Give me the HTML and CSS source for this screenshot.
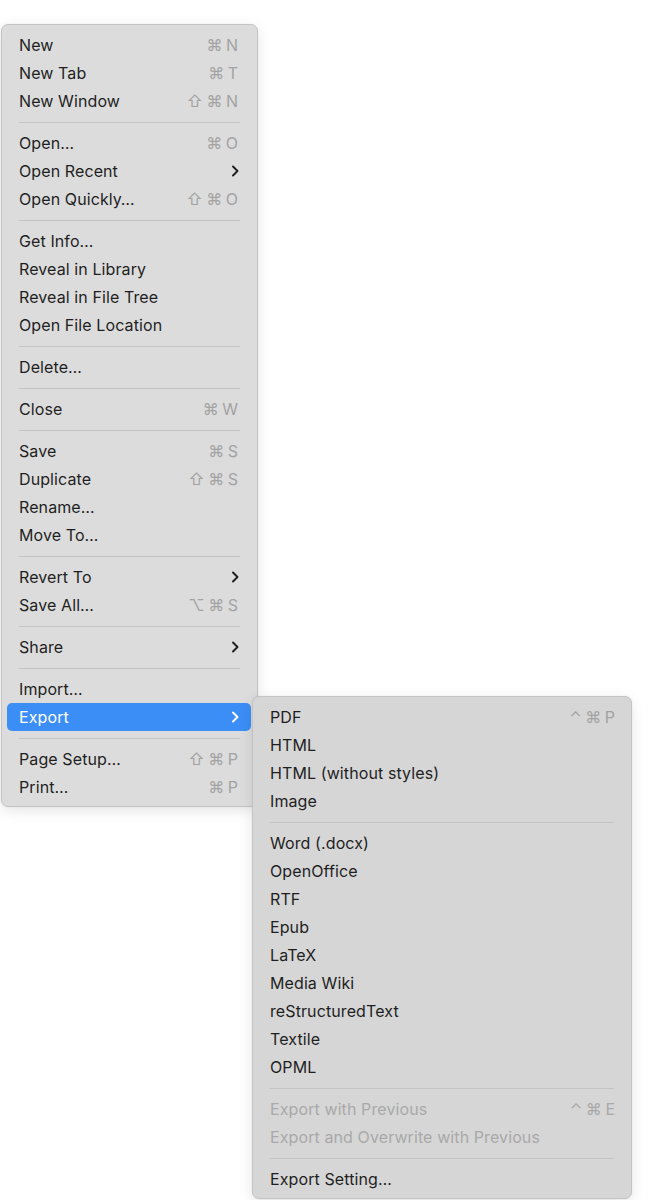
FILE: index.html
```html
<!DOCTYPE html>
<html>
<head>
<meta charset="utf-8">
<link rel="stylesheet" href="styles.css">
</head>
<body>
<div class="menu main">
  <div class="item"><span class="label">New</span><span class="key">⌘ N</span></div>
  <div class="item"><span class="label">New Tab</span><span class="key">⌘ T</span></div>
  <div class="item"><span class="label">New Window</span><span class="key">⇧ ⌘ N</span></div>
  <div class="sep"></div>
  <div class="item"><span class="label">Open…</span><span class="key">⌘ O</span></div>
  <div class="item"><span class="label">Open Recent</span><svg class="chev" viewBox="0 0 8 12"><path d="M2 1.5 L6.5 6 L2 10.5"/></svg></div>
  <div class="item"><span class="label">Open Quickly…</span><span class="key">⇧ ⌘ O</span></div>
  <div class="sep"></div>
  <div class="item"><span class="label">Get Info…</span></div>
  <div class="item"><span class="label">Reveal in Library</span></div>
  <div class="item"><span class="label">Reveal in File Tree</span></div>
  <div class="item"><span class="label">Open File Location</span></div>
  <div class="sep"></div>
  <div class="item"><span class="label">Delete…</span></div>
  <div class="sep"></div>
  <div class="item"><span class="label">Close</span><span class="key">⌘ W</span></div>
  <div class="sep"></div>
  <div class="item"><span class="label">Save</span><span class="key">⌘ S</span></div>
  <div class="item"><span class="label">Duplicate</span><span class="key">⇧ ⌘ S</span></div>
  <div class="item"><span class="label">Rename…</span></div>
  <div class="item"><span class="label">Move To…</span></div>
  <div class="sep"></div>
  <div class="item"><span class="label">Revert To</span><svg class="chev" viewBox="0 0 8 12"><path d="M2 1.5 L6.5 6 L2 10.5"/></svg></div>
  <div class="item"><span class="label">Save All…</span><span class="key">⌥ ⌘ S</span></div>
  <div class="sep"></div>
  <div class="item"><span class="label">Share</span><svg class="chev" viewBox="0 0 8 12"><path d="M2 1.5 L6.5 6 L2 10.5"/></svg></div>
  <div class="sep"></div>
  <div class="item"><span class="label">Import…</span></div>
  <div class="item active"><span class="label">Export</span><svg class="chev" viewBox="0 0 8 12"><path d="M2 1.5 L6.5 6 L2 10.5"/></svg>
    <div class="menu sub">
      <div class="item"><span class="label">PDF</span><span class="key">⌃ ⌘ P</span></div>
      <div class="item"><span class="label">HTML</span></div>
      <div class="item"><span class="label">HTML (without styles)</span></div>
      <div class="item"><span class="label">Image</span></div>
      <div class="sep"></div>
      <div class="item"><span class="label">Word (.docx)</span></div>
      <div class="item"><span class="label">OpenOffice</span></div>
      <div class="item"><span class="label">RTF</span></div>
      <div class="item"><span class="label">Epub</span></div>
      <div class="item"><span class="label">LaTeX</span></div>
      <div class="item"><span class="label">Media Wiki</span></div>
      <div class="item"><span class="label">reStructuredText</span></div>
      <div class="item"><span class="label">Textile</span></div>
      <div class="item"><span class="label">OPML</span></div>
      <div class="sep"></div>
      <div class="item disabled"><span class="label">Export with Previous</span><span class="key">⌃ ⌘ E</span></div>
      <div class="item disabled"><span class="label">Export and Overwrite with Previous</span></div>
      <div class="sep"></div>
      <div class="item"><span class="label">Export Setting…</span></div>
    </div>
  </div>
  <div class="sep"></div>
  <div class="item"><span class="label">Page Setup…</span><span class="key">⇧ ⌘ P</span></div>
  <div class="item"><span class="label">Print…</span><span class="key">⌘ P</span></div>
</div>
</body>
</html>
```

FILE: styles.css
```css
html, body {
  margin: 0;
  padding: 0;
  background: #ffffff;
}
body {
  font-family: "Inter", "Noto Sans", "DejaVu Sans", sans-serif;
  font-size: 16px;
  color: #1f1f1f;
  padding-top: 24px;
  padding-left: 1px;
  height: 1200px;
  box-sizing: border-box;
}
.menu {
  box-sizing: border-box;
  background: #dcdcdc;
  border: 1px solid #c4c4c4;
  border-radius: 7px;
  box-shadow: 0 4px 14px rgba(0, 0, 0, 0.10), 0 0 2px rgba(0, 0, 0, 0.06);
  display: flex;
  flex-direction: column;
}
.main {
  width: 257px;
  padding: 6px 6px 5px 5px;
}
.sub {
  position: absolute;
  left: 245px;
  top: -7px;
  width: 380px;
  padding: 6px 7px 5px 5px;
  background: #d6d6d6;
  color: #1f1f1f;
  z-index: 2;
}
.item {
  position: relative;
  height: 28px;
  display: flex;
  align-items: center;
  justify-content: space-between;
  padding: 0 13px 0 12px;
  border-radius: 5px;
  white-space: nowrap;
}
.sub .item {
  padding-right: 9px;
}
.label {
  letter-spacing: 0.1px;
}
.key {
  color: #a3a3a3;
  font-family: "Inter", "DejaVu Sans", sans-serif;
  font-size: 16px;
  word-spacing: -1px;
}
.chev {
  width: 8px;
  height: 12px;
  margin-right: -1px;
  fill: none;
  stroke: #1e1e1e;
  stroke-width: 1.9;
  stroke-linecap: round;
  stroke-linejoin: round;
}
.active {
  background: #3b8ef5;
  color: #ffffff;
}
.active > .chev {
  stroke: #ffffff;
}
.disabled {
  color: #a9a9a9;
}
.disabled .key {
  color: #a9a9a9;
}
.sep {
  height: 14px;
  display: flex;
  align-items: center;
  padding: 0 11px 0 12px;
}
.sep::before {
  content: "";
  flex: 1;
  height: 1px;
  background: #c4c4c4;
}
.sub .sep {
  padding-right: 10px;
}
```
